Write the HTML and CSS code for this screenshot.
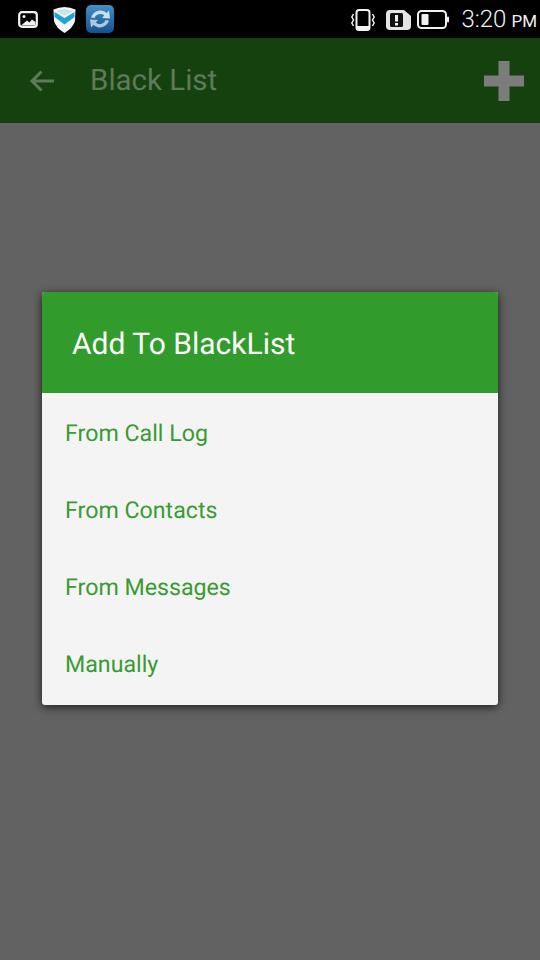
FILE: index.html
```html
<!DOCTYPE html>
<html lang="en">
<head>
    <meta charset="UTF-8">
    <meta name="viewport" content="width=device-width, initial-scale=1.0">
    <title>Black List</title>
    <link rel="stylesheet" href="styles.css">
</head>
<body>
    <div class="screen">
        <!-- Status bar -->
        <div class="status-bar">
            <div class="status-left">
                <svg class="ico-photo" width="20" height="17" viewBox="0 0 20 17">
                    <rect x="1.200" y="1.200" width="17.600" height="14.600" rx="2.800" fill="#000" stroke="#f2f2f2" stroke-width="2.200"/>
                    <circle cx="6" cy="5.500" r="1.500" fill="#f2f2f2"/>
                    <path d="M3 14.500 L9 9.500 L11.500 11.500 L14 8.500 L17.500 11 L17.500 14.500 Z" fill="#f2f2f2"/>
                </svg>
                <svg class="ico-shield" width="23" height="27" viewBox="0 0 23 27">
                    <path d="M0.500 3.500 Q11.500 -1.500 22.500 3.500 L22 15 Q20 22 11.500 27 Q3 22 1 15 Z" fill="#f4f7f7"/>
                    <path d="M3 5 Q11.500 1.500 20 5 L11.500 9.500 Z" fill="#c4e4ef"/>
                    <path d="M1.500 6 L11.500 12 L21.500 6 L21.500 11 L11.500 18.500 L1.500 11 Z" fill="#1fa3dc"/>
                </svg>
                <svg class="ico-sync" width="28" height="28" viewBox="0 0 28 28">
                    <defs>
                        <linearGradient id="syncBg" x1="0" y1="0" x2="0" y2="1">
                            <stop offset="0" stop-color="#3f92c8"/>
                            <stop offset="1" stop-color="#164f8c"/>
                        </linearGradient>
                    </defs>
                    <rect x="0" y="0" width="28" height="28" rx="5" fill="url(#syncBg)"/>
                    <path d="M5 12.500 A9.500 9.500 0 0 1 20.500 8 L23 5.500 L24 13.500 L16 13 L18.200 10.500 A6 6 0 0 0 8.500 13 Z" fill="#c9dfec"/>
                    <path d="M23 15.500 A9.500 9.500 0 0 1 7.500 20 L5 22.500 L4 14.500 L12 15 L9.800 17.500 A6 6 0 0 0 19.500 15 Z" fill="#a9c9dd"/>
                </svg>
            </div>
            <div class="status-right">
                <svg class="ico-vib" width="24" height="22" viewBox="0 0 24 22">
                    <rect x="5.500" y="1" width="13" height="20" rx="2.500" fill="none" stroke="#f2f2f2" stroke-width="2"/>
                    <rect x="6" y="17" width="12" height="3.500" fill="#f2f2f2"/>
                    <path d="M2.500 5 L0.800 8 L2.500 11 L0.800 14 L2.500 17 M21.500 5 L23.200 8 L21.500 11 L23.200 14 L21.500 17" fill="none" stroke="#f2f2f2" stroke-width="1.500"/>
                </svg>
                <svg class="ico-sim" width="25" height="20" viewBox="0 0 25 20">
                    <path d="M4 0 H18 L25 6 V16 Q25 20 21 20 H4 Q0 20 0 16 V4 Q0 0 4 0 Z" fill="#e4e4e4"/>
                    <rect x="4" y="3" width="13" height="14" rx="1.500" fill="#111"/>
                    <rect x="9" y="5" width="3" height="6.500" fill="#f2f2f2"/>
                    <rect x="9" y="13" width="3" height="2.500" fill="#f2f2f2"/>
                </svg>
                <svg class="ico-batt" width="32" height="19" viewBox="0 0 32 19">
                    <rect x="1" y="1" width="28" height="17" rx="3.500" fill="#000" stroke="#f2f2f2" stroke-width="2"/>
                    <rect x="4.500" y="4" width="7" height="11" rx="1" fill="#f2f2f2"/>
                    <rect x="30" y="6.500" width="2" height="6" rx="1" fill="#f2f2f2"/>
                </svg>
                <span class="clock">3:20<span class="ampm">PM</span></span>
            </div>
        </div>

        <!-- App bar, dimmed by the dialog -->
        <div class="app-bar">
            <svg class="back" width="26" height="24" viewBox="0 0 26 24">
                <path d="M25 12 H3 M12.500 2.500 L3 12 L12.500 21.500" fill="none" stroke="#5e7a5a" stroke-width="3"/>
            </svg>
            <div class="app-title">Black List</div>
            <svg class="add" width="40" height="40" viewBox="0 0 40 40">
                <path d="M14.500 0 H25.500 V14.500 H40 V25.500 H25.500 V40 H14.500 V25.500 H0 V14.500 H14.500 Z" fill="#7c7c7c"/>
            </svg>
        </div>

        <div class="content"></div>

        <!-- Add dialog -->
        <div class="overlay">
            <div class="dialog">
                <div class="dialog-title">Add To BlackList</div>
                <div class="dialog-list">
                    <div class="dialog-item">From Call Log</div>
                    <div class="dialog-item">From Contacts</div>
                    <div class="dialog-item">From Messages</div>
                    <div class="dialog-item">Manually</div>
                </div>
            </div>
        </div>
    </div>
</body>
</html>
```

FILE: styles.css
```css
body {
    margin: 0;
    padding: 0;
    font-family: Roboto, "Noto Sans", sans-serif;
    text-rendering: geometricPrecision;
}
.screen {
    position: relative;
    display: flex;
    flex-direction: column;
    width: 540px;
    height: 960px;
    overflow: hidden;
    background-color: #626262;
}
/* Status bar */
.status-bar {
    display: flex;
    justify-content: space-between;
    align-items: center;
    height: 38px;
    padding: 0 3px 0 18px;
    background-color: #000;
    flex-shrink: 0;
}
.status-left {
    display: flex;
    align-items: center;
    gap: 15px;
}
.status-left svg {
    display: block;
}
.ico-sync {
    margin-left: -5px;
}
.status-right {
    display: flex;
    align-items: center;
    gap: 11px;
}
.status-right svg {
    display: block;
}
.ico-vib {
    margin-top: 1px;
}
.ico-sim {
    margin-top: 1px;
}
.ico-batt {
    margin-left: -5px;
    margin-top: 1px;
}
.clock {
    margin-left: 1px;
    color: #f2f2f2;
    font-size: 24px;
    font-weight: 300;
    white-space: nowrap;
}
.ampm {
    margin-left: 5px;
    font-size: 17px;
    font-weight: 400;
}
/* App bar */
.app-bar {
    display: flex;
    align-items: center;
    height: 85px;
    padding: 0 16px 0 29px;
    background-color: #15410f;
    flex-shrink: 0;
}
.app-title {
    flex: 1;
    margin-left: 35px;
    color: #5e7a5a;
    font-size: 29.500px;
}
/* Page behind the dialog */
.content {
    flex: 1;
}
/* Dialog */
.overlay {
    position: absolute;
    top: 38px;
    left: 0;
    right: 0;
    bottom: 0;
    padding-bottom: 1px;
    display: flex;
    justify-content: center;
    align-items: center;
}
.dialog {
    width: 456px;
    border-radius: 3px;
    overflow: hidden;
    background-color: #f4f4f4;
    box-shadow: 0 2px 10px rgba(0, 0, 0, 0.7);
}
.dialog-title {
    display: flex;
    align-items: center;
    height: 97px;
    padding-top: 4px;
    padding-left: 30px;
    background-color: #319c2b;
    color: #fff;
    font-size: 30px;
}
.dialog-list {
    padding: 1px 0 3px;
}
.dialog-item {
    display: flex;
    align-items: center;
    height: 77px;
    padding-left: 23px;
    color: #389b33;
    font-size: 23.200px;
}
```
